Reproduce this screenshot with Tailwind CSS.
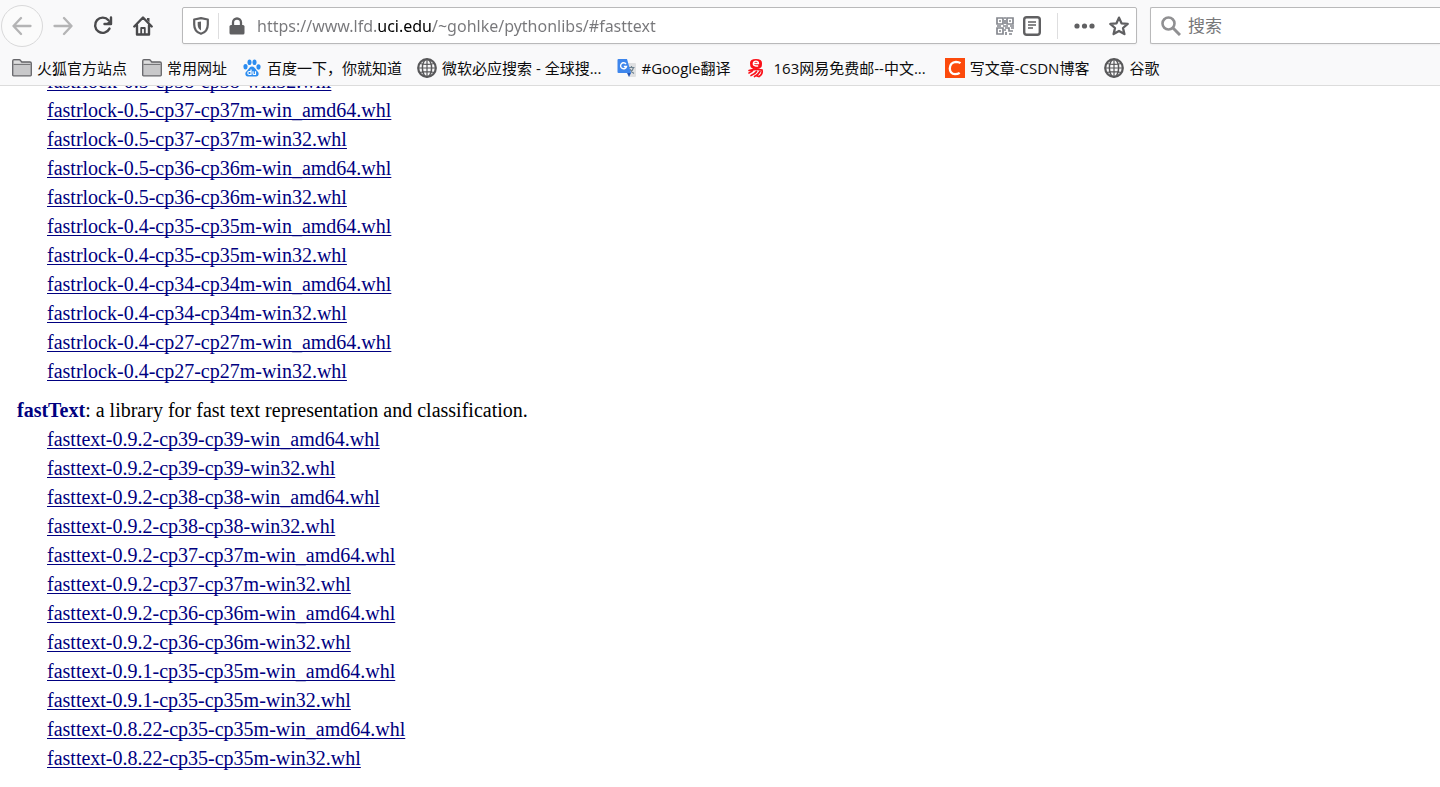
<!DOCTYPE html>
<html lang="zh-CN">

<head>
  <meta charset="UTF-8">
  <meta name="viewport" content="width=device-width, initial-scale=1.0">
  <title>Unofficial Windows Binaries for Python Extension Packages</title>
  <script src="https://cdn.jsdelivr.net/npm/@tailwindcss/browser@4"></script>
</head>

<body class="h-screen flex flex-col overflow-hidden bg-white">
  <!-- Shared symbols -->
  <svg class="hidden">
    <symbol id="folder" viewBox="0 0 20 20">
      <path d="M.7 17V3Q.7 1.6 2 1.6h5.2q.8 0 1.3.8L9.8 4H18q1.3 0 1.3 1.3V17q0 .8-.8.8h-17q-.8 0-.8-.8z" fill="#c8c8ca" stroke="#66666a" stroke-width="1.3"/>
      <path d="M1.500 6.500h17" stroke="#77777a" stroke-width="1"/>
      <path d="M2 5.200V3.400q0-.5.500-.5h4.700L9 5.200z" fill="#dededf"/>
    </symbol>
    <symbol id="globe" viewBox="0 0 20 20">
      <g fill="none" stroke="#58585a" stroke-width="1.5">
        <circle cx="10" cy="10" r="8.8" stroke-width="2.2"/>
        <ellipse cx="10" cy="10" rx="4.6" ry="8.8"/>
        <path d="M10 1v18M1 10h18M2.800 5.500Q10 7.300 17.200 5.500M2.800 14.500Q10 12.700 17.200 14.500" stroke-width="1.2"/>
      </g>
    </symbol>
  </svg>

  <header class="shrink-0 bg-[#f9f9fa] border-b border-[#dcdcdc] font-['Open_Sans','Noto_Sans_CJK_SC',sans-serif]">
    <!-- Navigation toolbar -->
    <div class="flex items-center h-[51px]">
      <div class="flex items-center w-[182px] shrink-0 text-[#4a4a4c]">
        <button type="button" aria-label="后退" class="size-[42px] ml-px rounded-full border border-[#d9d9da] bg-[#fbfbfb] flex items-center justify-center text-[#b4b4b5]">
          <svg class="size-5" viewBox="0 0 20 20" fill="none" stroke="currentColor" stroke-width="2.3" stroke-linecap="round" stroke-linejoin="round"><path d="M18.500 10H1.500M9 2L1.500 10 9 18"/></svg>
        </button>
        <button type="button" aria-label="前进" class="size-10 flex items-center justify-center text-[#b4b4b5]">
          <svg class="size-5" viewBox="0 0 20 20" fill="none" stroke="currentColor" stroke-width="2.3" stroke-linecap="round" stroke-linejoin="round"><path d="M1.500 10H18.500M11 2l7.500 8L11 18"/></svg>
        </button>
        <button type="button" aria-label="刷新" class="size-10 flex items-center justify-center">
          <svg class="size-5" viewBox="0 0 20 20" fill="none" stroke="currentColor" stroke-width="2.4"><path d="M15.500 4.300A7.600 7.600 0 1 0 16.500 12.600" stroke-linecap="round"/><path d="M18 1.500V8h-6.500" stroke-linecap="round" stroke-linejoin="round"/><path d="M18 3v5h-5z" fill="currentColor" stroke="none"/></svg>
        </button>
        <button type="button" aria-label="主页" class="size-10 flex items-center justify-center">
          <svg class="size-5" viewBox="0 0 20 20" fill="none" stroke="currentColor" stroke-width="2.4" stroke-linecap="round" stroke-linejoin="round"><path d="M1.300 10.500L10 1.500l8.700 9M4 9.500v9h12v-9"/><path d="M8.200 18v-6h3.600V18" stroke-width="1.8"/><path d="M14 2h2.500v4.500L14 4z" fill="currentColor" stroke="none"/></svg>
        </button>
      </div>

      <div class="flex items-center flex-1 h-[37px] bg-white border border-[#b9b9ba] rounded-xs shadow-xs text-[#606062]">
        <div class="flex items-center gap-[9px] pl-[10px] shrink-0">
          <svg class="w-4 h-[18px]" viewBox="0 0 16 18" fill="none" stroke="currentColor" stroke-width="2.2"><path d="M8 1.200L14.800 2.500V7.500C14.800 12 12.500 15.500 8 16.800 3.500 15.500 1.200 12 1.200 7.500V2.500z" stroke-linejoin="round"/><path d="M8 4.500v9C5.500 12 4.700 10 4.700 7.500V5z" fill="currentColor" stroke="none"/></svg>
          <span class="w-px h-[26px] bg-[#dededf]"></span>
          <svg class="w-4 h-[18px] ml-px" viewBox="0 0 16 18"><rect x="0.500" y="8" width="15" height="9.500" rx="1.500" fill="currentColor"/><path d="M4 9V5.500a4 4 0 0 1 8 0V9" fill="none" stroke="currentColor" stroke-width="2.3"/></svg>
        </div>
        <!-- The registered domain is darker than the rest of the address -->
        <input type="text" aria-label="网址" value="https://www.lfd.uci.edu/~gohlke/pythonlibs/#fasttext" class="flex-1 min-w-0 h-full ml-3 outline-none font-['Noto_Sans',sans-serif] text-[16px] text-transparent bg-clip-text bg-[linear-gradient(to_right,#77777a_121px,#000_121px,#000_176px,#77777a_176px)]">
        <div class="flex items-center shrink-0 pr-[7px]">
          <button type="button" aria-label="二维码" class="mr-[9px]">
            <svg class="size-[18px]" viewBox="0 0 18 18" fill="none" stroke="#85888f" stroke-width="1.7"><path d="M1 1h6v6H1zM11 1h6v6h-6zM1 11h6v6H1z"/><path d="M3 4h2M13 4h2M3 14h2M8 1h2M9 3v4M1 9h4M7 9h5M14 9h4M9 11h4v3h4M10 15v3M13 17h3M15 11h3M8 13h2"/></svg>
          </button>
          <button type="button" aria-label="阅读模式" class="mr-[16px]">
            <svg class="w-[18px] h-5" viewBox="0 0 18 20" fill="none" stroke="currentColor" stroke-width="2.4"><rect x="1.200" y="1.200" width="15.600" height="17.600" rx="2.5"/><path d="M5 6h8M5 9h8M5 12h5" stroke-width="1.3"/></svg>
          </button>
          <span class="w-px h-[26px] bg-[#dededf] mr-[16px]"></span>
          <button type="button" aria-label="页面操作" class="mr-[14px]">
            <svg class="w-[21px] h-5" viewBox="0 0 21 20" fill="currentColor"><circle cx="3" cy="10" r="2.6"/><circle cx="10.5" cy="10" r="2.6"/><circle cx="18" cy="10" r="2.6"/></svg>
          </button>
          <button type="button" aria-label="添加书签">
            <svg class="size-5" viewBox="0 0 20 20" fill="none" stroke="currentColor" stroke-width="2.3" stroke-linejoin="round"><path d="M10 1.600l2.500 5.700 6.200.6-4.700 4.100 1.400 6.100L10 14.900l-5.400 3.200L6 12 1.300 7.900l6.200-.6z"/></svg>
          </button>
        </div>
      </div>

      <label class="flex items-center w-[290px] h-[37px] ml-[13px] shrink-0 bg-white border border-r-0 border-[#b9b9ba] rounded-l-xs shadow-xs">
        <svg class="size-5 ml-[10px] mr-[7px] shrink-0" viewBox="0 0 20 20" fill="none" stroke="#909092" stroke-width="2.6"><circle cx="7.500" cy="7.500" r="6"/><path d="M12 12l7 7" stroke-width="3"/></svg>
        <input type="search" aria-label="搜索" placeholder="搜索" class="flex-1 min-w-0 outline-none text-[17px] placeholder:text-[#777779]">
      </label>
    </div>

    <!-- Bookmarks toolbar -->
    <nav class="flex items-center gap-[15px] h-[34px] pl-3 text-[15px] text-[#0c0c0d] whitespace-nowrap">
      <a href="#" class="flex items-center gap-[5px]"><svg class="size-5"><use href="#folder"/></svg>火狐官方站点</a>
      <a href="#" class="flex items-center gap-[5px]"><svg class="size-5"><use href="#folder"/></svg>常用网址</a>
      <a href="#" class="flex items-center gap-[5px]">
        <svg class="size-5" viewBox="0 0 20 20"><g fill="#2b8cf0"><ellipse cx="3.500" cy="8.700" rx="2.100" ry="2.700"/><ellipse cx="7.500" cy="4.200" rx="2" ry="2.800"/><ellipse cx="12.500" cy="4.200" rx="2" ry="2.800"/><ellipse cx="16.500" cy="9" rx="2.100" ry="2.700"/><path d="M10 8.500c2.200 0 3 2 4.500 3.700 1.600 1.600 2.500 2.500 2 4.600-.6 2.200-3.300 1.700-6.500 1.700s-5.900.5-6.500-1.700c-.5-2.100.4-3 2-4.600C7 10.500 7.800 8.500 10 8.500z"/></g><path d="M9 11.500v5H7.300a1.500 1.500 0 0 1 0-3H9M11 13.300v2.200q0 1 1 1h1.500v-3.200" fill="none" stroke="#fff" stroke-width="1.2"/></svg>
        百度一下，你就知道</a>
      <a href="#" class="flex items-center gap-[5px]"><svg class="size-5"><use href="#globe"/></svg>微软必应搜索 - 全球搜...</a>
      <a href="#" class="flex items-center gap-[5px]">
        <svg class="size-5" viewBox="0 0 20 20"><path d="M9 5h9q1 0 1 1v12q0 1-1 1h-6z" fill="#dfe0e2"/><path d="M11.500 9.500h6M14.500 8v1.500M16.500 9.500q-1 4-4 5.500M13 11q1 3 4 4.500" fill="none" stroke="#6f8290" stroke-width="1.2"/><path d="M10 15h4l-2 4z" fill="#2454b4"/><path d="M1.500 1H10l4 14H1.500q-1 0-1-1V2q0-1 1-1z" fill="#3e86ec"/><path d="M9 6A3 3 0 1 0 9.500 8.500H6.800" fill="none" stroke="#fff" stroke-width="1.4"/></svg>
        #Google翻译</a>
      <a href="#" class="flex items-center gap-2 pr-1">
        <svg class="size-5" viewBox="0 0 20 20"><path d="M4 5q0-4 6-4t6 4-1 4.500Q13 11 10 11T5 9.500Q4 8 4 5z" fill="#fa1018"/><path d="M7.300 5.500h5.200Q12.500 3.200 10 3.200T7.300 5.500 10 8h2.200" fill="none" stroke="#fff" stroke-width="1.3"/><path d="M3 12.500q7-2 13-.5 1 4-3 6.500l-2-.5M7.500 11Q6 14 3 15M10.500 13.500Q9 16 5 17.500M14 13.500Q12 17 8.500 18.500" fill="none" stroke="#fa1018" stroke-width="1.7" stroke-linecap="round"/></svg>
        163网易免费邮--中文...</a>
      <a href="#" class="flex items-center gap-[5px]">
        <svg class="size-5" viewBox="0 0 20 20"><path d="M0 0h20v20H0z" fill="#fc4a0c"/><path d="M15.500 5.200Q13.700 3.800 11 3.800 5 4.200 4.800 10.500q.2 5.500 5.200 5.700 2.800 0 4.700-1.300" fill="none" stroke="#fff" stroke-width="2.3"/></svg>
        写文章-CSDN博客</a>
      <a href="#" class="flex items-center gap-[5px]"><svg class="size-5"><use href="#globe"/></svg>谷歌</a>
    </nav>
  </header>

  <!-- Page content, scrolled to the #fasttext anchor -->
  <main class="flex-1 min-h-0 overflow-hidden pl-[17px] font-['Liberation_Serif',serif] text-[20px] leading-[29px] text-black">
    <ul class="-mt-[19px] pl-[30px] text-[#000080] underline decoration-1 underline-offset-2 [text-decoration-skip-ink:none]">
      <li><a href="#">fastrlock-0.5-cp38-cp38-win32.whl</a></li>
      <li><a href="#">fastrlock-0.5-cp37-cp37m-win_amd64.whl</a></li>
      <li><a href="#">fastrlock-0.5-cp37-cp37m-win32.whl</a></li>
      <li><a href="#">fastrlock-0.5-cp36-cp36m-win_amd64.whl</a></li>
      <li><a href="#">fastrlock-0.5-cp36-cp36m-win32.whl</a></li>
      <li><a href="#">fastrlock-0.4-cp35-cp35m-win_amd64.whl</a></li>
      <li><a href="#">fastrlock-0.4-cp35-cp35m-win32.whl</a></li>
      <li><a href="#">fastrlock-0.4-cp34-cp34m-win_amd64.whl</a></li>
      <li><a href="#">fastrlock-0.4-cp34-cp34m-win32.whl</a></li>
      <li><a href="#">fastrlock-0.4-cp27-cp27m-win_amd64.whl</a></li>
      <li><a href="#">fastrlock-0.4-cp27-cp27m-win32.whl</a></li>
    </ul>
    <p id="fasttext" class="mt-[10px]"><strong class="text-[#000080]">fastText</strong>: a library for fast text representation and classification.</p>
    <ul class="pl-[30px] text-[#000080] underline decoration-1 underline-offset-2 [text-decoration-skip-ink:none]">
      <li><a href="#">fasttext-0.9.2-cp39-cp39-win_amd64.whl</a></li>
      <li><a href="#">fasttext-0.9.2-cp39-cp39-win32.whl</a></li>
      <li><a href="#">fasttext-0.9.2-cp38-cp38-win_amd64.whl</a></li>
      <li><a href="#">fasttext-0.9.2-cp38-cp38-win32.whl</a></li>
      <li><a href="#">fasttext-0.9.2-cp37-cp37m-win_amd64.whl</a></li>
      <li><a href="#">fasttext-0.9.2-cp37-cp37m-win32.whl</a></li>
      <li><a href="#">fasttext-0.9.2-cp36-cp36m-win_amd64.whl</a></li>
      <li><a href="#">fasttext-0.9.2-cp36-cp36m-win32.whl</a></li>
      <li><a href="#">fasttext-0.9.1-cp35-cp35m-win_amd64.whl</a></li>
      <li><a href="#">fasttext-0.9.1-cp35-cp35m-win32.whl</a></li>
      <li><a href="#">fasttext-0.8.22-cp35-cp35m-win_amd64.whl</a></li>
      <li><a href="#">fasttext-0.8.22-cp35-cp35m-win32.whl</a></li>
    </ul>
  </main>
</body>

</html>
